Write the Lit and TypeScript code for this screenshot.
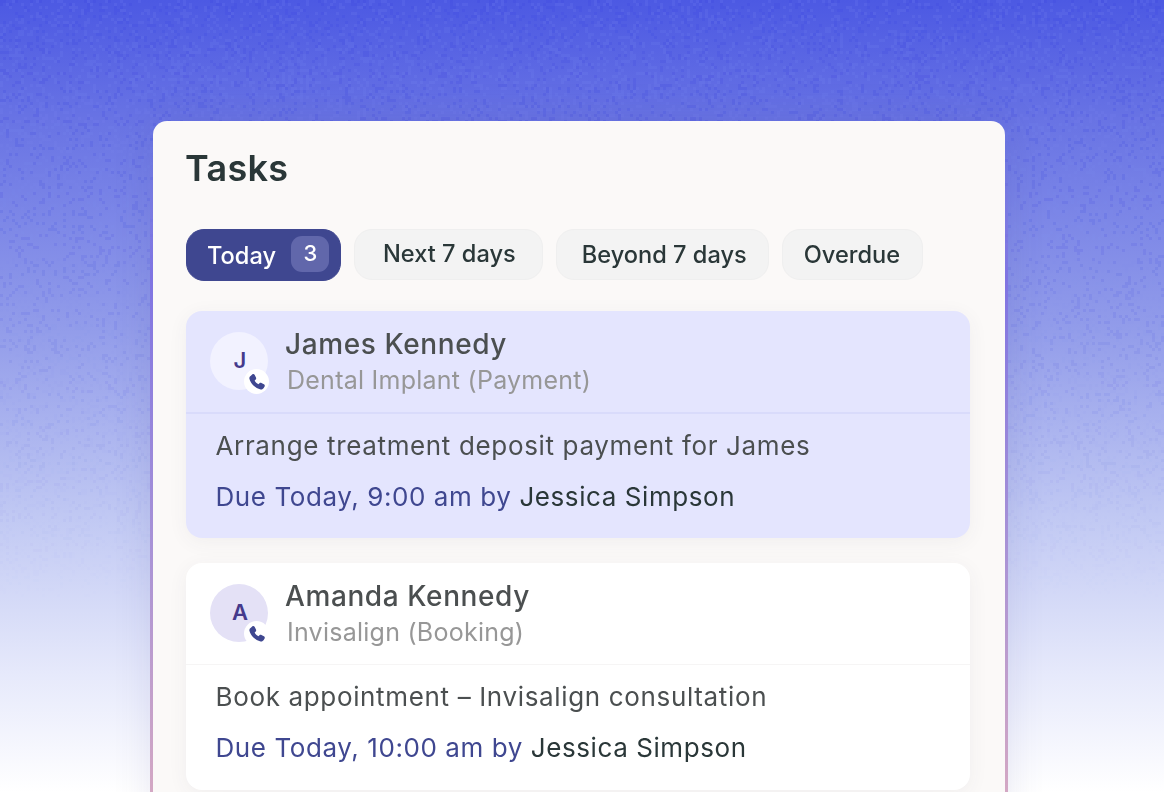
import { LitElement, html, css } from "lit";
import { customElement } from "lit/decorators.js";

const phone = html`<svg viewBox="2.5 2.5 19 19" width="16" height="16"><path fill="#3f4790" d="M6.600 2.900c1-.6 2.200-.2 2.700.8l1.500 2.900c.4.800.3 1.800-.3 2.400L9.200 10.200c.9 1.900 2.600 3.600 4.500 4.500l1.200-1.300c.6-.6 1.600-.7 2.400-.3l2.900 1.500c1 .5 1.400 1.700.8 2.700l-1 1.800c-.8 1.300-2.200 2-3.700 1.700C10 19.600 4.300 14 3 8.200c-.3-1.500.4-2.900 1.700-3.700z"/></svg>`;

const tasks = [
  { i: "J", name: "James Kennedy", sub: "Dental Implant (Payment)", text: "Arrange treatment deposit payment for James", due: "Due Today, 9:00 am by", active: true },
  { i: "A", name: "Amanda Kennedy", sub: "Invisalign (Booking)", text: "Book appointment – Invisalign consultation", due: "Due Today, 10:00 am by", active: false },
];

@customElement("app-root")
export class AppRoot extends LitElement {
  static styles = css`
    :host { display: block; width: 1164px; height: 792px; overflow: hidden; position: relative; font-family: Inter, "Liberation Sans", sans-serif;
      background: linear-gradient(180deg, #4c59e3 0%, #6873e4 15%, #939dea 42%, #c0c8f3 65%, #e6e9fb 85%, #ffffff 100%); }
    canvas { position: absolute; inset: 0; width: 1164px; height: 792px; image-rendering: pixelated; }
    .stage { position: relative; display: flex; padding: 121px 0 0 153px; height: 792px; box-sizing: border-box; }
    .panel { width: 852px; height: 720px; box-sizing: border-box; background: #fbf9f8; border-radius: 14px 14px 0 0; padding: 24px 35px 0 33px;
      box-shadow: 0 0 40px rgba(70, 70, 150, .14); position: relative; }
    .edge { position: absolute; top: 30px; bottom: 0; width: 3px; background: linear-gradient(180deg, rgba(125,114,228,0) 0%, #7f74e2 18%, #a993d6 58%, #dcacc0 100%); }
    .edge.l { left: -3px; } .edge.r { right: -3px; }
    h1 { margin: 0 0 0 -1px; font-size: 36px; line-height: 46px; font-weight: 600; color: #2a3738; letter-spacing: .3px; }
    .tabs { display: flex; gap: 13px; margin-top: 38px; align-items: flex-start; }
    .tab { display: flex; align-items: center; height: 51px; box-sizing: border-box; padding: 0 22px; border-radius: 18px; background: #f3f3f3; border: 1px solid #efefef; font-size: 23.6px; color: #2a3738; font-weight: 450; }
    .tab.next { padding: 0 26px 3px 28px; }
    .tab.beyond { padding: 0 21px 0 25px; }
    .tab.over { padding: 0 22px 1px 21px; }
    .tab.on { height: 52px; background: #3f4790; border-color: #3f4790; color: #fff; gap: 15px; padding: 0 11px 0 20px; }
    .count { width: 38px; height: 36px; border-radius: 11px; background: #6167ab; display: flex; align-items: center; justify-content: center; padding: 0 0 3px 1px; margin-top: -2px; box-sizing: border-box; font-size: 22px; }
    .cards { display: flex; flex-direction: column; gap: 25px; margin-top: 30px; }
    .card { background: #fff; border-radius: 16px; box-shadow: 0 4px 20px rgba(60, 60, 90, .06); height: 227px; overflow: hidden; }
    .card.on { background: #e4e5fe; }
    .head { display: flex; gap: 18px; height: 102px; box-sizing: border-box; padding: 21px 24px 0; border-bottom: 1px solid #f6f5f5; }
    .on .head { border-bottom: 2px solid #d9dbfb; height: 103px; }
    .avatar { position: relative; flex: none; width: 58px; height: 58px; border-radius: 50%; background: #e4e1f6; color: #453a8c; font-size: 22px; font-weight: 600; display: flex; align-items: center; justify-content: center; padding: 0 0 2px 2px; box-sizing: border-box; }
    .on .avatar { background: #f2f2ff; }
    .badge { position: absolute; right: -1px; bottom: -4px; width: 25px; height: 25px; border-radius: 50%; background: #fff; display: flex; align-items: center; justify-content: center; }
    .name { font-size: 28px; line-height: 34px; font-weight: 500; color: #4b4f50; letter-spacing: .6px; margin: -5px 0 0 -1px; }
    .sub { font-size: 25px; line-height: 38px; color: #979797; margin-left: 1px; letter-spacing: .25px; }
    .body { padding: 14px 30px 0 29.500px; }
    .text { font-size: 26px; line-height: 36px; color: #4b4f50; letter-spacing: .65px; }
    .due { font-size: 26px; line-height: 36px; color: #3f4790; margin-top: 15px; letter-spacing: .58px; }
    .due b { font-weight: 400; color: #2a3738; }
  `;

  firstUpdated() {
    const c = this.renderRoot.querySelector("canvas") as HTMLCanvasElement;
    const w = 388, h = 264;
    c.width = w; c.height = h;
    const g = c.getContext("2d")!;
    let s = 12345;
    const r = () => (s = (s * 1664525 + 1013904223) >>> 0) / 4294967296;
    for (let y = 0; y < h; y++) {
      const a = Math.max(0, 1 - y / 200);
      for (let x = 0; x < w; x++) {
        const v = r();
        if (v < 0.14) { g.fillStyle = `rgba(60,70,225,${0.22 * a})`; g.fillRect(x, y, 1, 1); }
        else if (v > 0.82) { g.fillStyle = `rgba(130,145,245,${0.14 * a})`; g.fillRect(x, y, 1, 1); }
      }
    }
  }

  render() {
    return html`
      <canvas></canvas>
      <div class="stage">
        <div class="panel">
          <div class="edge l"></div><div class="edge r"></div>
          <h1>Tasks</h1>
          <div class="tabs">
            <div class="tab on">Today <span class="count">3</span></div>
            <div class="tab next">Next 7 days</div>
            <div class="tab beyond">Beyond 7 days</div>
            <div class="tab over">Overdue</div>
          </div>
          <div class="cards">
            ${tasks.map((t) => html`
              <div class="card ${t.active ? "on" : ""}">
                <div class="head">
                  <div class="avatar">${t.i}<span class="badge">${phone}</span></div>
                  <div><div class="name">${t.name}</div><div class="sub">${t.sub}</div></div>
                </div>
                <div class="body">
                  <div class="text">${t.text}</div>
                  <div class="due">${t.due} <b>Jessica Simpson</b></div>
                </div>
              </div>`)}
          </div>
        </div>
      </div>`;
  }
}
